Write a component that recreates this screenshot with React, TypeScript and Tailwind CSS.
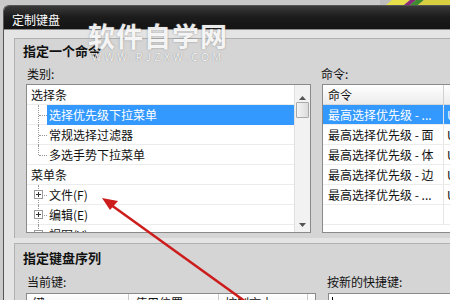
import React from "react";

const leftRows = [
  { label: "选择条", level: 0 },
  { label: "选择优先级下拉菜单", level: 1, selected: true },
  { label: "常规选择过滤器", level: 1 },
  { label: "多选手势下拉菜单", level: 1, last: true },
  { label: "菜单条", level: 0 },
  { label: "文件(F)", level: 1, plus: true },
  { label: "编辑(E)", level: 1, plus: true },
  { label: "视图(V)", level: 1, plus: true },
];

const cmdRows = [
  "最高选择优先级 - ...",
  "最高选择优先级 - 面",
  "最高选择优先级 - 体",
  "最高选择优先级 - 边",
  "最高选择优先级 - ...",
];

function PlusBox() {
  return (
    <span className="flex h-[9px] w-[9px] items-center justify-center border border-[#9a9a9a] bg-white">
      <svg width="7" height="7" viewBox="0 0 7 7">
        <path d="M1 3.5h5M3.5 1v5" stroke="#333" strokeWidth="1" />
      </svg>
    </span>
  );
}

export default function App() {
  return (
    <div
      className="relative h-[300px] w-[450px] overflow-hidden bg-[#cbcbcb] text-[12px] text-[#111]"
      style={{ fontFamily: '"Noto Sans CJK SC", "Noto Sans", sans-serif' }}
    >
      {/* top strip */}
      <div className="relative h-[5px] bg-[#c9c9c9]">
        <svg className="absolute right-0 top-0" width="70" height="5" viewBox="0 0 70 5">
          <rect x="0" y="0" width="70" height="5" fill="#bdbdbd" />
          <polygon points="6,5 12,0 30,0 24,5" fill="#e8e04a" />
          <polygon points="24,5 30,0 36,0 30,5" fill="#8a2a7a" />
          <polygon points="30,5 36,0 44,0 38,5" fill="#3e8a2e" />
          <polygon points="38,5 44,0 70,0 70,5" fill="#d8d040" />
        </svg>
      </div>

      {/* window */}
      <div className="ml-[3px] rounded-tl-[6px] border-l border-t border-[#555] bg-[#e4e4e4]">
        <div className="flex h-[23px] items-center rounded-tl-[5px] bg-gradient-to-b from-[#3a3a3a] via-[#1b1b1b] to-[#141414] pl-[8px] pt-[4px] text-[12px] text-white">
          定制键盘
        </div>
        <div className="h-[1px] bg-[#8c8c8c]" />

        <div className="pl-[10px] pt-[8px]">
          {/* panel 1 */}
          <div className="border-l border-t border-[#b0b0b0] bg-[#d5d5d5] pl-[8px] pt-[3px]">
            <div className="text-[13px] font-bold leading-[18px]">指定一个命令</div>
            <div className="mt-[6px] flex leading-[16px]">
              <div className="w-[298px] pl-[4px]">类别:</div>
              <div>命令:</div>
            </div>
            <div className="mt-[2px] flex pb-[5px]">
              {/* category tree */}
              <div className="ml-[3px] flex h-[149px] w-[285px] shrink-0 border border-[#8a8a8a] bg-white">
                <div className="flex-1 overflow-hidden">
                  {leftRows.map((r, i) => (
                    <div
                      key={i}
                      className="relative flex h-[20px] items-center border-b border-[#ececec]"
                    >
                      {r.level === 0 ? (
                        <span className="pl-[4px]">{r.label}</span>
                      ) : (
                        <>
                          <span
                            className={
                              "absolute left-[11px] w-0 border-l border-dotted border-[#999] " +
                              (r.last ? "top-0 h-[10px]" : "top-0 h-[20px]")
                            }
                          />
                          <span className="absolute left-[12px] top-[10px] w-[8px] border-t border-dotted border-[#999]" />
                          {r.plus && (
                            <span className="absolute left-[7px] top-[5px]">
                              <PlusBox />
                            </span>
                          )}
                          <span
                            className={
                              "ml-[20px] flex h-[20px] flex-1 items-center pl-[2px] " +
                              (r.selected ? "bg-[#3399ff] text-white" : "")
                            }
                          >
                            {r.label}
                          </span>
                        </>
                      )}
                    </div>
                  ))}
                </div>
                {/* scrollbar */}
                <div className="flex w-[16px] flex-col border-l border-[#e0e0e0] bg-[#f2f2f2]">
                  <div className="flex h-[17px] items-end justify-center pb-[2px]">
                    <svg width="7" height="4" viewBox="0 0 7 4">
                      <path d="M0 4L3.5 0L7 4Z" fill="#555" />
                    </svg>
                  </div>
                  <div className="mx-[1px] h-[16px] rounded-[1px] border border-[#a9a9a9] bg-gradient-to-r from-[#f4f4f4] to-[#dcdcdc]" />
                  <div className="flex-1" />
                  <div className="flex h-[14px] items-center justify-center">
                    <svg width="7" height="4" viewBox="0 0 7 4">
                      <path d="M0 0L3.5 4L7 0Z" fill="#555" />
                    </svg>
                  </div>
                </div>
              </div>

              {/* command list */}
              <div className="ml-[11px] h-[149px] flex-1 border-y border-l border-[#8a8a8a] bg-white">
                <div className="flex h-[20px] border-b border-[#d8d8d8] bg-gradient-to-b from-[#ffffff] to-[#ececec]">
                  <div className="flex w-[121px] items-center border-r border-[#d0d0d0] pl-[5px]">命令</div>
                  <div className="flex-1" />
                </div>
                {cmdRows.map((c, i) => (
                  <div
                    key={i}
                    className={
                      "flex h-[20px] border-b border-[#ececec] " +
                      (i === 0 ? "bg-[#3399ff] text-white" : "")
                    }
                  >
                    <div className="flex w-[121px] items-center border-r border-[#e6e6e6] pl-[5px] whitespace-nowrap">
                      {c}
                    </div>
                    <div className="flex items-center pl-[3px]">U</div>
                  </div>
                ))}
                <div className="flex h-[20px] border-b border-[#ececec]">
                  <div className="w-[121px] border-r border-[#e6e6e6]" />
                </div>
              </div>
            </div>
          </div>

          <div className="h-[5px]" />

          {/* panel 2 */}
          <div className="h-[80px] border-l border-t border-[#b0b0b0] bg-[#d5d5d5] pl-[8px] pt-[5px]">
            <div className="text-[13px] font-bold leading-[18px]">指定键盘序列</div>
            <div className="mt-[7px] flex leading-[16px]">
              <div className="w-[304px] pl-[4px]">当前键:</div>
              <div>按新的快捷键:</div>
            </div>
            <div className="mt-[3px] flex">
              <div className="ml-[3px] flex h-[20px] w-[290px] shrink-0 border border-[#8a8a8a] bg-gradient-to-b from-white to-[#ededed]">
                <div className="w-[102px] border-r border-[#c8c8c8] pl-[6px]">键</div>
                <div className="w-[90px] border-r border-[#c8c8c8] pl-[6px]">使用位置</div>
                <div className="w-[89px] border-r border-[#c8c8c8] pl-[6px]">控制文本</div>
              </div>
              <div className="ml-[12px] flex h-[20px] flex-1 border-y border-l border-[#8a8a8a] bg-white pl-[3px] pt-[3px]">
                <div className="h-[12px] w-[1px] bg-black" />
              </div>
            </div>
          </div>
        </div>
      </div>

      {/* watermark */}
      <div className="pointer-events-none absolute left-[88px] top-[21px] flex flex-col items-center">
        <div
          className="text-[27px] font-bold leading-[30px] tracking-[1px] text-white/90"
          style={{ textShadow: "0 0 2px rgba(90,90,90,0.6)" }}
        >
          软件自学网
        </div>
        <div
          className="text-[11px] leading-[11px] tracking-[3px] text-white/90"
          style={{ textShadow: "0 0 1px rgba(90,90,90,0.8)" }}
        >
          WWW.RJZXW.COM
        </div>
      </div>

      {/* red arrow */}
      <svg className="pointer-events-none absolute left-0 top-0" width="450" height="300" viewBox="0 0 450 300">
        <line x1="246" y1="302" x2="107" y2="202" stroke="#cc1c1c" strokeWidth="2.5" />
        <polygon points="102,198 118,201 110,210" fill="#cc1c1c" />
      </svg>
    </div>
  );
}
